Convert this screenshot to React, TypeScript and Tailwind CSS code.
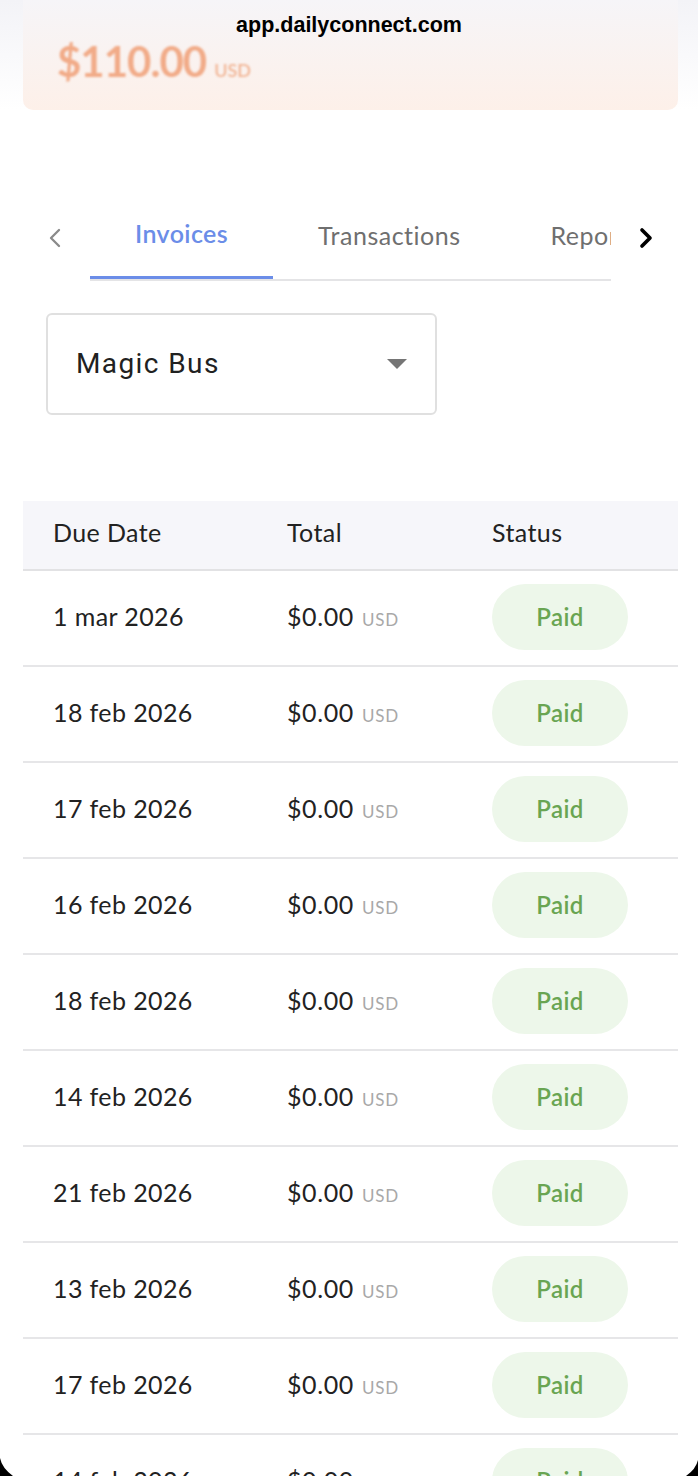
import { ChevronLeft, ChevronRight } from "lucide-react";

const rows = [
  "1 mar 2026",
  "18 feb 2026",
  "17 feb 2026",
  "16 feb 2026",
  "18 feb 2026",
  "14 feb 2026",
  "21 feb 2026",
  "13 feb 2026",
  "17 feb 2026",
  "14 feb 2026",
];

const sans = "font-['Lato','Open_Sans',sans-serif]";

export default function App() {
  return (
    <div className={`relative w-[698px] h-[1476px] overflow-hidden bg-white ${sans}`}>
      {/* balance card, partly under the browser bar */}
      <div className="h-[110px] bg-gradient-to-b from-[#f3f3f7] to-white pl-[23px] pr-[20px]">
        <div className="h-full rounded-b-[10px] bg-gradient-to-b from-[#f6f5f8] to-[#fdf0e9] px-[34px] pt-[36px] flex items-end">
          <div className="flex items-baseline gap-[8px] pb-[26px] blur-[1px]">
            <span className="text-[42px] font-bold leading-none tracking-[-1px] text-[#f1ab88]">
              $110.00
            </span>
            <span className="text-[18px] font-semibold text-[#f1b595]">USD</span>
          </div>
        </div>
      </div>

      {/* tabs */}
      <div className="mt-[90px] flex items-center h-[81px]">
        <div className="w-[90px] flex justify-center pl-[20px] pb-[6px] text-[#8a8a8a]">
          <ChevronLeft size={32} strokeWidth={1.75} />
        </div>
        <div className="w-[521px] h-full relative overflow-hidden border-b-2 border-[#e4e4e6]">
          <div className="flex h-full whitespace-nowrap">
            <div className="h-full px-[45px] pb-[8px] flex items-center text-[25px] tracking-[0.4px] font-semibold text-[#6b8de8] border-b-[3px] border-[#6b8de8] -mb-[2px]">
              Invoices
            </div>
            <div className="h-full px-[45px] pb-[8px] flex items-center text-[25px] tracking-[0.5px] text-[#6f6f6f]">
              Transactions
            </div>
            <div className="h-full px-[45px] pb-[8px] flex items-center text-[25px] tracking-[0.5px] text-[#6f6f6f]">
              Reports
            </div>
          </div>
        </div>
        <div className="flex-1 flex justify-center pr-[18px] pb-[6px] text-black">
          <ChevronRight size={32} strokeWidth={2.75} />
        </div>
      </div>

      {/* child select */}
      <div className="mt-[32px] ml-[46px] w-[391px] h-[102px] rounded-[6px] border-2 border-[#e0e0e0] flex items-center justify-between pl-[28px] pr-[28px]">
        <span className="font-['Roboto',sans-serif] text-[28px] tracking-[1.4px] text-[#212121]">
          Magic Bus
        </span>
        <svg width="20" height="10" viewBox="0 0 20 10">
          <path d="M0 0 L20 0 L10 10 Z" fill="#757575" />
        </svg>
      </div>

      {/* invoices table */}
      <div className="mt-[86px] ml-[23px] mr-[20px]">
        <div className="h-[70px] pb-[4px] bg-[#f6f6fa] border-b-2 border-[#e2e2e4] flex items-center text-[25px] tracking-[0.4px] text-[#222]">
          <div className="w-[264px] pl-[30px]">Due Date</div>
          <div className="w-[205px]">Total</div>
          <div>Status</div>
        </div>
        {rows.map((d, i) => (
          <div
            key={i}
            className="h-[96px] pb-[2px] border-b-2 border-[#e6e6e8] flex items-center text-[25px] tracking-[0.4px] text-[#222]"
          >
            <div className="w-[264px] pl-[30px]">{d}</div>
            <div className="w-[205px] flex items-baseline gap-[8px]">
              <span className="tracking-[0.6px]">$0.00</span>
              <span className="text-[17px] text-[#a8a8a8] tracking-[0.8px]">USD</span>
            </div>
            <div className="w-[136px] h-[66px] rounded-full bg-[#edf7ea] flex items-center justify-center text-[24px] tracking-[0.4px] font-semibold text-[#69a552]">
              Paid
            </div>
          </div>
        ))}
      </div>

      {/* browser address overlay */}
      <div className="absolute top-[9px] left-0 right-0 text-center font-['Liberation_Sans',sans-serif] text-[21.5px] font-semibold text-black">
        app.dailyconnect.com
      </div>

      {/* rounded screen corners */}
      <svg className="absolute left-0 bottom-0" width="14" height="18" viewBox="0 0 14 18">
        <path d="M0 0 Q2 10 13 18 L0 18 Z" fill="black" />
      </svg>
      <svg className="absolute right-0 bottom-0" width="12" height="16" viewBox="0 0 12 16">
        <path d="M12 0 Q10 9 0 16 L12 16 Z" fill="black" />
      </svg>
    </div>
  );
}
